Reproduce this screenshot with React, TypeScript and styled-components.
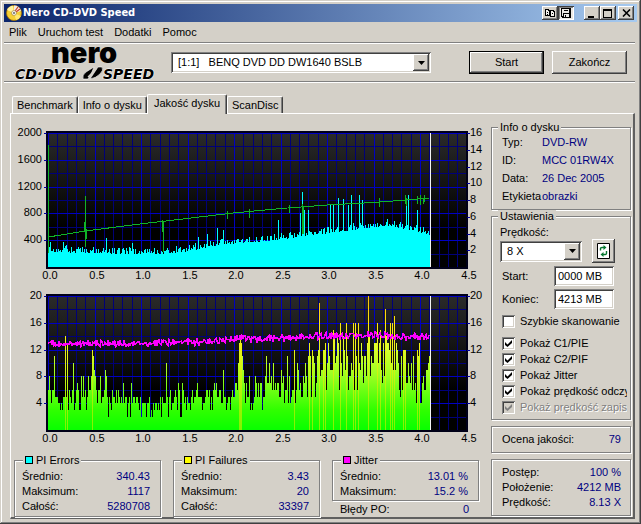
import React, { useState } from "react";
import styled, { createGlobalStyle, css } from "styled-components";

const GlobalStyle = createGlobalStyle`
  * { box-sizing: border-box; }
  body {
    margin: 0;
    background: #d4d0c8;
    color: #000;
    font: 11px/15px "Liberation Sans", Arial, sans-serif;
  }
  button, input, select { font: inherit; color: inherit; }
`;

const raised = css`
  border: 0;
  background: #d4d0c8;
  box-shadow: inset -1px -1px 0 #404040, inset 1px 1px 0 #fff, inset -2px -2px 0 #808080;
`;

const sunken = css`
  border: 0;
  background: #fff;
  box-shadow: inset 1px 1px 0 #808080, inset -1px -1px 0 #fff, inset 2px 2px 0 #404040,
    inset -2px -2px 0 #d4d0c8;
`;

const etched = css`
  border: 1px solid #808080;
  box-shadow: 1px 1px 0 #fff, inset 1px 1px 0 #fff;
`;

const Window = styled.main`
  min-height: 100vh;
  padding: 4px 4px 5px;
  background: #d4d0c8;
  box-shadow: inset -1px -1px 0 #404040, inset 1px 1px 0 #d4d0c8, inset -2px -2px 0 #808080,
    inset 2px 2px 0 #fff;
`;

const TitleBar = styled.header`
  display: flex;
  align-items: center;
  height: 18px;
  padding: 0 3px 0 2px;
  background: linear-gradient(90deg, #0a246a, #a6caf0);
  color: #fff;
`;

const Title = styled.h1`
  flex: 1;
  margin: 0 0 0 1px;
  font: bold 11px/18px "DejaVu Sans Condensed", "DejaVu Sans", sans-serif;
  white-space: nowrap;
`;

const ButtonGroup = styled.div`
  display: flex;
  margin-left: ${(p: { $gap?: number }) => p.$gap ?? 0}px;
`;

const TitleButton = styled.button<{ $pressed?: boolean }>`
  ${raised}
  display: grid;
  place-items: center;
  width: 16px;
  height: 14px;
  padding: 0;
  ${(p) =>
    p.$pressed &&
    css`
      background: #eae8e4;
      box-shadow: inset 1px 1px 0 #404040, inset -1px -1px 0 #fff, inset 2px 2px 0 #808080;
    `}
`;

const MenuBar = styled.nav`
  display: flex;
  gap: 11px;
  height: 20px;
  padding-left: 5px;
`;

const MenuItem = styled.button`
  padding: 0;
  border: 0;
  background: none;
`;

const Separator = styled.hr`
  height: 2px;
  margin: 0 2px 0 0;
  border: 0;
  border-top: 1px solid #808080;
  background: #fff;
`;

const Toolbar = styled.div`
  display: flex;
  align-items: center;
  gap: 7px;
  height: 37px;
  padding: 0 10px;
`;

const SelectFrame = styled.div<{ $width: number }>`
  ${sunken}
  display: grid;
  grid-template-columns: minmax(0, 1fr);
  flex: 0 1 ${(p) => p.$width}px;
  height: 21px;
  padding: 2px;
`;

const Select = styled.select`
  grid-area: 1 / 1;
  appearance: none;
  min-width: 0;
  padding: 0 18px 0 5px;
  border: 0;
  outline: 0;
  background: transparent;
  white-space: pre;
`;

const DropArrow = styled.span`
  ${raised}
  grid-area: 1 / 1;
  justify-self: end;
  display: grid;
  place-items: center;
  width: 16px;
  pointer-events: none;
`;

const Actions = styled.div`
  display: flex;
  gap: 8px;
  margin-left: auto;
`;

const PushButton = styled.button<{ $default?: boolean }>`
  ${raised}
  width: 75px;
  height: 23px;
  padding: 0;
  border: ${(p) => (p.$default ? "1px solid #000" : "0")};
`;

const TabStrip = styled.div`
  display: flex;
  align-items: flex-end;
  height: 30px;
  padding-left: 8px;
`;

const Tab = styled.button<{ $active: boolean }>`
  position: relative;
  height: ${(p) => (p.$active ? 20 : 17)}px;
  margin-bottom: ${(p) => (p.$active ? -1 : 0)}px;
  padding: ${(p) => (p.$active ? "0 6px 2px" : "0 4px")};
  border: 1px solid #fff;
  border-right: 1px solid #404040;
  border-bottom: 0;
  border-radius: 2px 2px 0 0;
  background: #d4d0c8;
  box-shadow: inset -1px 0 0 #808080;
  white-space: nowrap;
`;

const TabPanel = styled.section`
  display: grid;
  grid-template-columns: minmax(0, 1fr) 140px;
  gap: 4px;
  margin: 0 2px 0 6px;
  padding-right: 2px;
  border: solid;
  border-width: 1px 2px 2px 1px;
  border-color: #fff #606060 #606060 #fff;
`;

const ChartColumn = styled.div`
  padding-top: 10px;
`;

const Chart = styled.svg`
  display: block;
  width: 100%;
  height: auto;
  font: 11px "Liberation Sans", Arial, sans-serif;
`;

const StatsRow = styled.div`
  display: grid;
  grid-template-columns: repeat(3, minmax(0, 1fr));
  gap: 12px;
  padding: 4px 8px 0 3px;
`;

const SideColumn = styled.aside`
  display: flex;
  flex-direction: column;
  padding-top: 7px;
`;

const Group = styled.fieldset<{ $pad: string }>`
  ${etched}
  min-width: 0;
  margin: 0;
  padding: ${(p) => p.$pad};
`;

const Legend = styled.legend<{ $shift?: number }>`
  display: flex;
  align-items: center;
  gap: 3px;
  height: 12px;
  margin-left: ${(p) => p.$shift ?? 0}px;
  padding: 0 2px;
  background: #d4d0c8;
  line-height: 12px;
`;

const Swatch = styled.span<{ $color: string }>`
  width: 8px;
  height: 8px;
  border: 1px solid #000;
  background: ${(p) => p.$color};
`;

const Facts = styled.dl<{ $line: number; $pad?: string }>`
  margin: 0;
  padding: ${(p) => p.$pad ?? "0"};
  line-height: ${(p) => p.$line}px;
`;

const Fact = styled.div<{ $labelWidth?: number }>`
  display: flex;
  justify-content: ${(p) => (p.$labelWidth ? "flex-start" : "space-between")};
  white-space: nowrap;
  dt { flex-basis: ${(p) => (p.$labelWidth ? `${p.$labelWidth}px` : "auto")}; }
  dd { margin: 0; color: #000080; }
`;

const FactBox = styled.div`
  ${etched}
  margin-top: 6px;
  padding: 5px 9px 5px 10px;
`;

const SpeedLabel = styled.label`
  display: block;
  line-height: 14px;
`;

const SpeedRow = styled.div`
  display: flex;
  align-items: center;
  gap: 10px;
  height: 24px;
`;

const RefreshButton = styled.button`
  ${raised}
  display: grid;
  place-items: center;
  width: 23px;
  height: 24px;
  padding: 0;
`;

const FieldRow = styled.div`
  display: flex;
  align-items: center;
  justify-content: space-between;
  height: 20px;
  margin-top: 3px;
  padding: 0 13px 0 2px;
`;

const TextInput = styled.input`
  ${sunken}
  width: 60px;
  height: 20px;
  padding: 0 4px;
`;

const Checks = styled.div`
  margin-top: ${(p: { $top: number }) => p.$top}px;
  padding-left: 2px;
`;

const CheckLabel = styled.label<{ $disabled?: boolean }>`
  display: flex;
  align-items: center;
  gap: 5px;
  height: 16px;
  overflow: hidden;
  white-space: nowrap;
  color: ${(p) => (p.$disabled ? "#808080" : "#000")};
  text-shadow: ${(p) => (p.$disabled ? "1px 1px 0 #fff" : "none")};
`;

const CheckFrame = styled.span`
  display: grid;
  flex: none;
  place-items: center;
  width: 13px;
  height: 13px;
`;

const CheckInput = styled.input`
  ${sunken}
  grid-area: 1 / 1;
  appearance: none;
  width: 13px;
  height: 13px;
  margin: 0;
  &:disabled { background: #d4d0c8; }
`;

const Tick = styled.svg`
  grid-area: 1 / 1;
  z-index: 1;
  pointer-events: none;
`;

/* ---------- chart data ---------- */

const X0 = 37;
const X_END = 419;
const X_STEP = 93;
const Y_BASE = 143;
const Y_SPAN = 134;

const noise = (i: number, seed: number) => {
  let h = (i * 374761393 + seed * 668265263) | 0;
  h = Math.imul(h ^ (h >>> 13), 1274126177);
  return ((h ^ (h >>> 16)) >>> 0) / 4294967296;
};

type Point = [number, number];

const interpolate = (points: Point[], x: number) => {
  for (let i = 1; i < points.length; i++) {
    const [ax, ay] = points[i - 1];
    const [bx, by] = points[i];
    if (x <= bx) return ay + ((by - ay) * (x - ax)) / (bx - ax);
  }
  return points[points.length - 1][1];
};

const columns = Array.from({ length: X_END - X0 }, (_, i) => X0 + i);

const errorLevel: Point[] = [
  [37, 126], [109, 128], [154, 128], [179, 125], [204, 120], [229, 117], [259, 115],
  [289, 111], [319, 107], [349, 103], [374, 100], [389, 102], [404, 106], [419, 109],
];
const errorPeaks: Record<number, number> = {
  39: 118, 52: 118, 55: 121, 95: 114, 121: 119, 187: 113, 196: 110, 206: 104, 212: 106,
  267: 96, 289: 89, 291: 68, 293: 86, 297: 86, 319: 81, 322: 81, 327: 74, 332: 75, 337: 81,
  340: 71, 348: 71, 351: 76, 383: 97, 395: 77, 397: 71, 406: 86,
};
const errorBars = columns
  .map((x) => {
    const r = noise(x, 3);
    const y = errorPeaks[x] ?? Math.round(interpolate(errorLevel, x) + 2 - r * r * 7);
    return `M${x + 0.5} ${Y_BASE}V${y}`;
  })
  .join("");

const speedLine =
  "M37.5 113L74 107L129 100L176 94.5L222 89L270 84.5L316 81L362 78.5L395 76L418 74";
const speedSpikes: [number, number, number][] = [
  [37, 21, 129], [74, 72, 123], [73, 98, 107], [75, 105, 115], [152, 97, 128], [151, 96, 108],
  [216, 87, 95], [238, 85, 94], [278, 81, 89], [291, 80, 110], [292, 82, 110], [368, 74, 83],
  [394, 71, 80], [395, 74, 82], [406, 72, 80], [409, 71, 81], [412, 74, 80], [413, 71, 78],
];

const failureLow: Point[] = [
  [37, 4], [75, 4], [90, 3], [115, 3], [150, 3], [200, 4], [235, 4], [270, 5], [300, 6],
  [330, 7], [370, 8], [390, 6], [419, 5],
];
const failureHigh: Point[] = [
  [37, 6], [80, 7], [100, 6], [130, 5], [170, 6], [222, 7], [240, 8], [270, 9], [295, 11],
  [315, 14], [360, 14], [385, 14], [400, 12], [419, 10],
];
const failurePeaks: Record<number, number> = {
  38: 8, 43: 11, 54: 14, 56: 13, 62: 10, 70: 8, 72: 8, 77: 8, 80: 8, 81: 12, 82: 11, 83: 9,
  84: 8, 89: 8, 94: 9, 95: 8, 112: 7, 120: 7, 155: 10, 167: 7, 171: 7, 186: 7, 203: 7, 205: 7,
  212: 9, 227: 10, 228: 13, 229: 14, 230: 13, 231: 11, 232: 9, 255: 11, 258: 10, 262: 10,
  276: 11, 283: 12, 286: 10, 298: 13, 301: 12, 308: 19, 312: 12, 314: 13, 322: 15, 329: 16,
  335: 16, 342: 16, 344: 16, 347: 16, 357: 20, 366: 16, 369: 15, 374: 18, 379: 16, 381: 16,
  383: 17, 392: 12, 394: 12, 406: 12, 408: 13, 418: 11,
};
const failureAt = (x: number) => {
  if (failurePeaks[x]) return failurePeaks[x];
  const lo = interpolate(failureLow, x);
  const hi = interpolate(failureHigh, x);
  if (noise(x, 19) < 0.12) return Math.max(2, Math.round(lo) - 1);
  return Math.round(lo + (hi - lo) * noise(x, 7));
};
const failureBars = columns
  .map((x) => `M${x + 0.5} ${Y_BASE}V${Math.round(Y_BASE - failureAt(x) * 6.7)}`)
  .join("");
const failureStripes = columns
  .filter((x) => failureAt(x) >= 12 && failurePeaks[x])
  .map((x) => `M${x + 0.5} ${Y_BASE}V${Math.round(Y_BASE - failureAt(x) * 6.7)}`)
  .join("");

const jitterLevel: Point[] = [
  [37, 56], [60, 56], [120, 57], [150, 56], [190, 55], [219, 53], [229, 51], [245, 52],
  [275, 51], [305, 49], [330, 49], [355, 48], [375, 48], [395, 50], [419, 49],
];
const jitterLine = columns
  .map((x, i) => {
    const y = interpolate(jitterLevel, x) + (noise(x, 31) - 0.5) * 6;
    return `${i ? "L" : "M"}${x} ${y.toFixed(1)}`;
  })
  .join("");

/* ---------- chart drawing ---------- */

interface PlotProps {
  title: string;
  leftLabels: number[];
  leftMax: number;
  rightLabels: number[];
  rightMax: number;
  children: React.ReactNode;
}

function Plot({ title, leftLabels, leftMax, rightLabels, rightMax, children }: PlotProps) {
  const yOf = (v: number, max: number) => Y_BASE - (v / max) * Y_SPAN;
  const xs = Array.from({ length: 46 }, (_, i) => i);
  const ys = Array.from({ length: 11 }, (_, i) => i);
  const gridX = (i: number) => Math.round(X0 + (i * X_STEP) / 10) + 0.5;
  const gridY = (i: number) => Math.round(Y_BASE - (i * Y_SPAN) / 10) + 0.5;
  const lines = (major: boolean) =>
    xs.filter((i) => (i % 5 === 0) === major).map((i) => `M${gridX(i)} 9V143`).join("") +
    ys.filter((i) => (i % 2 === 0) === major).map((i) => `M35 ${gridY(i)}H457`).join("");
  return (
    <Chart viewBox="0 0 476 163" role="img" aria-label={title}>
      <defs>
        <linearGradient id="plotBack" x1="0" y1="0" x2="0" y2="1">
          <stop offset="0" stopColor="#2b2b2b" />
          <stop offset="0.7" stopColor="#000" />
        </linearGradient>
        <linearGradient id="failureFill" gradientUnits="userSpaceOnUse" x1="0" y1="143" x2="0" y2="9">
          <stop offset="0" stopColor="#08ff00" />
          <stop offset="0.15" stopColor="#30ff00" />
          <stop offset="0.4" stopColor="#98ff20" />
          <stop offset="0.62" stopColor="#dcff30" />
          <stop offset="0.8" stopColor="#ffe820" />
          <stop offset="1" stopColor="#ff9010" />
        </linearGradient>
      </defs>
      <g shapeRendering="crispEdges" fill="none">
        <rect x="35" y="7" width="422" height="137" fill="url(#plotBack)" />
        <path d={lines(false)} stroke="#000078" />
        <path d={lines(true)} stroke="#0000c4" />
        <path d="M35 7.5H457M36 7V144M456 7V144M35 143.5H457" stroke="#000018" strokeWidth="2" />
        <path
          d={
            leftLabels.map((v) => `M33 ${Math.round(yOf(v, leftMax)) + 0.5}H36`).join("") +
            rightLabels.map((v) => `M456 ${Math.round(yOf(v, rightMax)) + 0.5}H459`).join("")
          }
          stroke="#0000a0"
        />
        {children}
        <path d={`M${X_END + 0.5} 9V143`} stroke="#f4f4f4" />
      </g>
      {leftLabels.map((v) => (
        <text key={v} x="31" y={Math.round(yOf(v, leftMax)) + 3} textAnchor="end">{v}</text>
      ))}
      {rightLabels.map((v) => (
        <text key={v} x="459" y={Math.round(yOf(v, rightMax)) + 3}>{v}</text>
      ))}
      {Array.from({ length: 10 }, (_, i) => (
        <text key={i} x={39 + Math.round((i * X_STEP) / 2)} y="155" textAnchor="middle">
          {(i / 2).toFixed(1)}
        </text>
      ))}
    </Chart>
  );
}

/* ---------- icons ---------- */

const DiscIcon = () => (
  <svg width="16" height="16" viewBox="0 0 16 16" aria-hidden="true">
    <circle cx="8" cy="8" r="7.5" fill="#f5cf35" stroke="#a87400" strokeWidth="0.8" />
    <path d="M8 8L1 5A7 7 0 0 1 7 .8Z" fill="#fff3a0" />
    <path d="M8 8L15 11A7 7 0 0 1 10 15Z" fill="#ffe870" />
    <path d="M8 8L8 .6A7.4 7.4 0 0 1 15 6Z" fill="#f3ece4" />
    <path d="M9 6L12 2M10 7L14 4" stroke="#cc3b28" strokeWidth="1.2" />
    <circle cx="8" cy="8" r="2.4" fill="#fff" stroke="#98803c" strokeWidth="0.7" />
    <circle cx="8" cy="8" r="0.9" fill="#555" />
  </svg>
);

const Logo = () => (
  <svg width="150" height="36" viewBox="0 0 150 36" role="img" aria-label="nero CD·DVD SPEED">
    <text x="37" y="18" fontFamily="Inter, Liberation Sans, sans-serif" fontWeight="900" fontSize="29">
      nero
    </text>
    <g fontFamily="DejaVu Sans, sans-serif" fontWeight="bold" fontStyle="italic" fontSize="14" stroke="#fff" strokeWidth="1" paintOrder="stroke">
      <text x="1" y="34">CD·DVD</text>
      <text x="89" y="34">SPEED</text>
    </g>
    <path d="M74 34L69 34Q68 30 72 27L80 22Q78 28 74 34Z" stroke="#fff" strokeWidth="0.6" />
    <path d="M76 34L84 22L88 22Q90 25 86 29Q82 33 76 34Z" stroke="#fff" strokeWidth="0.6" />
    <path d="M74 32L82 24" stroke="#d4d0c8" strokeWidth="1.2" />
  </svg>
);

const ArrowDown = () => (
  <svg width="7" height="4" viewBox="0 0 7 4" aria-hidden="true">
    <path d="M0 0H7L3.5 4Z" />
  </svg>
);

const CopyIcon = () => (
  <svg width="10" height="10" viewBox="0 0 10 10" shapeRendering="crispEdges" aria-hidden="true">
    <path d="M0 1H4V2H5V8H0ZM5 2H9V3H10V9H5Z" />
    <path d="M1 2H3V3H4V7H1ZM6 3H8V4H9V8H6Z" fill="#f4f2ee" />
    <path d="M2 4H3V5H2ZM2 6H3V7H2ZM7 5H8V6H7Z" />
  </svg>
);

const SaveIcon = () => (
  <svg width="10" height="10" viewBox="0 0 10 10" shapeRendering="crispEdges" aria-hidden="true">
    <path d="M0 0H10V10H1V9H0Z" />
    <path d="M2 1H8V5H2ZM3 6H8V9H3ZM1 1H1.5V8H1Z" fill="#eae8e4" />
    <path d="M3 2H7V3H3ZM4 7H5V9H4Z" />
  </svg>
);

const MinimizeIcon = () => (
  <svg width="10" height="9" viewBox="0 0 10 9" aria-hidden="true"><path d="M1 7H7V9H1Z" /></svg>
);

const MaximizeIcon = () => (
  <svg width="10" height="9" viewBox="0 0 10 9" shapeRendering="crispEdges" aria-hidden="true">
    <path d="M0 0H9V9H0ZM1 2V8H8V2Z" fillRule="evenodd" />
  </svg>
);

const CloseIcon = () => (
  <svg width="9" height="8" viewBox="0 0 9 8" aria-hidden="true">
    <path d="M1 .5L8 7.5M8 .5L1 7.5" stroke="#000" strokeWidth="1.6" />
  </svg>
);

const RefreshIcon = () => (
  <svg width="13" height="16" viewBox="0 0 13 16" aria-hidden="true">
    <path d="M.5 .5H12.5V15.5H.5Z" fill="#fff" stroke="#000" />
    <path d="M3.5 7.5V5.5Q3.5 4.5 5 4.5H7M9.5 8V10.5Q9.5 11.5 8 11.5H6" fill="none" stroke="#087830" strokeWidth="1.4" />
    <path d="M6.5 2L9.5 4.5L6.5 7ZM6.5 9L3.5 11.5L6.5 14Z" fill="#087830" />
  </svg>
);

/* ---------- page ---------- */

function StatFact({ label, value }: { label: string; value: string }) {
  return (
    <Fact>
      <dt>{label}</dt>
      <dd>{value}</dd>
    </Fact>
  );
}

function StatGroup({ name, color, rows }: { name: string; color: string; rows: [string, string][] }) {
  return (
    <Group $pad="3px 10px 1px 7px">
      <Legend $shift={1}>
        <Swatch $color={color} />
        {name}
      </Legend>
      <Facts $line={15}>
        {rows.map(([label, value]) => <StatFact key={label} label={label} value={value} />)}
      </Facts>
    </Group>
  );
}

function CheckRow({ label, initial, disabled }: { label: string; initial: boolean; disabled?: boolean }) {
  const [checked, setChecked] = useState(initial);
  return (
    <CheckLabel $disabled={disabled}>
      <CheckFrame>
        <CheckInput
          type="checkbox"
          checked={checked}
          disabled={disabled}
          onChange={(e) => setChecked(e.target.checked)}
        />
        {checked && (
          <Tick width="7" height="7" viewBox="0 0 7 7" aria-hidden="true">
            <path d="M0 2L2.5 4.5L7 0V3L2.5 7L0 5Z" fill={disabled ? "#808080" : "#000"} />
          </Tick>
        )}
      </CheckFrame>
      {label}
    </CheckLabel>
  );
}

const discInfo: [string, string][] = [
  ["Typ:", "DVD-RW"],
  ["ID:", "MCC 01RW4X"],
  ["Data:", "26 Dec 2005"],
  ["Etykieta", "obrazki"],
];

const tabs = ["Benchmark", "Info o dysku", "Jakość dysku", "ScanDisc"];

export default function App() {
  const [tab, setTab] = useState("Jakość dysku");
  return (
    <>
      <GlobalStyle />
      <Window>
        <TitleBar>
          <DiscIcon />
          <Title>Nero CD-DVD Speed</Title>
          <ButtonGroup>
            <TitleButton aria-label="Kopiuj"><CopyIcon /></TitleButton>
            <TitleButton aria-label="Zapisz" $pressed><SaveIcon /></TitleButton>
          </ButtonGroup>
          <ButtonGroup $gap={10}>
            <TitleButton aria-label="Minimalizuj"><MinimizeIcon /></TitleButton>
            <TitleButton aria-label="Maksymalizuj"><MaximizeIcon /></TitleButton>
          </ButtonGroup>
          <ButtonGroup $gap={2}>
            <TitleButton aria-label="Zamknij"><CloseIcon /></TitleButton>
          </ButtonGroup>
        </TitleBar>

        <MenuBar>
          {["Plik", "Uruchom test", "Dodatki", "Pomoc"].map((m) => <MenuItem key={m}>{m}</MenuItem>)}
        </MenuBar>
        <Separator />
        <Toolbar>
          <Logo />
          <SelectFrame $width={260}>
            <Select aria-label="Napęd">
              <option>{"[1:1]\u00a0\u00a0 BENQ DVD DD DW1640 BSLB"}</option>
            </Select>
            <DropArrow><ArrowDown /></DropArrow>
          </SelectFrame>
          <Actions>
            <PushButton $default>Start</PushButton>
            <PushButton>Zakończ</PushButton>
          </Actions>
        </Toolbar>
        <Separator />

        <TabStrip role="tablist">
          {tabs.map((t) => (
            <Tab key={t} role="tab" aria-selected={t === tab} $active={t === tab} onClick={() => setTab(t)}>
              {t}
            </Tab>
          ))}
        </TabStrip>

        <TabPanel>
          <ChartColumn>
            <Plot
              title="PI Errors"
              leftLabels={[2000, 1600, 1200, 800, 400]}
              leftMax={2000}
              rightLabels={[16, 14, 12, 10, 8, 6, 4, 2]}
              rightMax={16}
            >
              <path d={errorBars} stroke="#00ffff" />
              <path d={speedSpikes.map(([x, a, b]) => `M${x + 0.5} ${a}V${b}`).join("")} stroke="#10b428" />
              <path d={speedLine} stroke="#10b428" />
            </Plot>
            <Plot
              title="PI Failures"
              leftLabels={[20, 16, 12, 8, 4]}
              leftMax={20}
              rightLabels={[20, 16, 12, 8, 4]}
              rightMax={20}
            >
              <path d={failureBars} stroke="url(#failureFill)" />
              <path d={failureStripes} stroke="#ffe800" strokeOpacity="0.5" />
              <path d={jitterLine} stroke="#ff00ff" strokeWidth="1.6" />
            </Plot>
            <StatsRow>
              <StatGroup
                name="PI Errors"
                color="#00ffff"
                rows={[["Średnio:", "340.43"], ["Maksimum:", "1117"], ["Całość:", "5280708"]]}
              />
              <StatGroup
                name="PI Failures"
                color="#ffff00"
                rows={[["Średnio:", "3.43"], ["Maksimum:", "20"], ["Całość:", "33397"]]}
              />
              <div>
                <StatGroup
                  name="Jitter"
                  color="#ff00ff"
                  rows={[["Średnio:", "13.01 %"], ["Maksimum:", "15.2 %"]]}
                />
                <Facts $line={15} $pad="1px 10px 0 8px">
                  <StatFact label="Błędy PO:" value="0" />
                </Facts>
              </div>
            </StatsRow>
          </ChartColumn>

          <SideColumn>
            <Group $pad="0 3px 4px 10px">
              <Legend $shift={-4}>Info o dysku</Legend>
              <Facts $line={18}>
                {discInfo.map(([label, value]) => (
                  <Fact key={label} $labelWidth={40}>
                    <dt>{label}</dt>
                    <dd>{value}</dd>
                  </Fact>
                ))}
              </Facts>
            </Group>

            <Group $pad="3px 3px 4px 8px">
              <Legend $shift={-2}>Ustawienia</Legend>
              <SpeedLabel htmlFor="speed">Prędkość:</SpeedLabel>
              <SpeedRow>
                <SelectFrame $width={82}>
                  <Select id="speed"><option>8 X</option></Select>
                  <DropArrow><ArrowDown /></DropArrow>
                </SelectFrame>
                <RefreshButton aria-label="Odśwież"><RefreshIcon /></RefreshButton>
              </SpeedRow>
              <FieldRow>
                <label htmlFor="from">Start:</label>
                <TextInput id="from" defaultValue="0000 MB" />
              </FieldRow>
              <FieldRow>
                <label htmlFor="to">Koniec:</label>
                <TextInput id="to" defaultValue="4213 MB" />
              </FieldRow>
              <Checks $top={4}>
                <CheckRow label="Szybkie skanowanie" initial={false} />
              </Checks>
              <Checks $top={6}>
                <CheckRow label="Pokaż C1/PIE" initial />
                <CheckRow label="Pokaż C2/PIF" initial />
                <CheckRow label="Pokaż Jitter" initial />
                <CheckRow label="Pokaż prędkość odczytu" initial />
                <CheckRow label="Pokaż prędkość zapisu" initial disabled />
              </Checks>
            </Group>

            <FactBox>
              <Facts $line={15}><StatFact label="Ocena jakości:" value="79" /></Facts>
            </FactBox>
            <FactBox>
              <Facts $line={15}>
                <StatFact label="Postęp:" value="100 %" />
                <StatFact label="Położenie:" value="4212 MB" />
                <StatFact label="Prędkość:" value="8.13 X" />
              </Facts>
            </FactBox>
          </SideColumn>
        </TabPanel>
      </Window>
    </>
  );
}
